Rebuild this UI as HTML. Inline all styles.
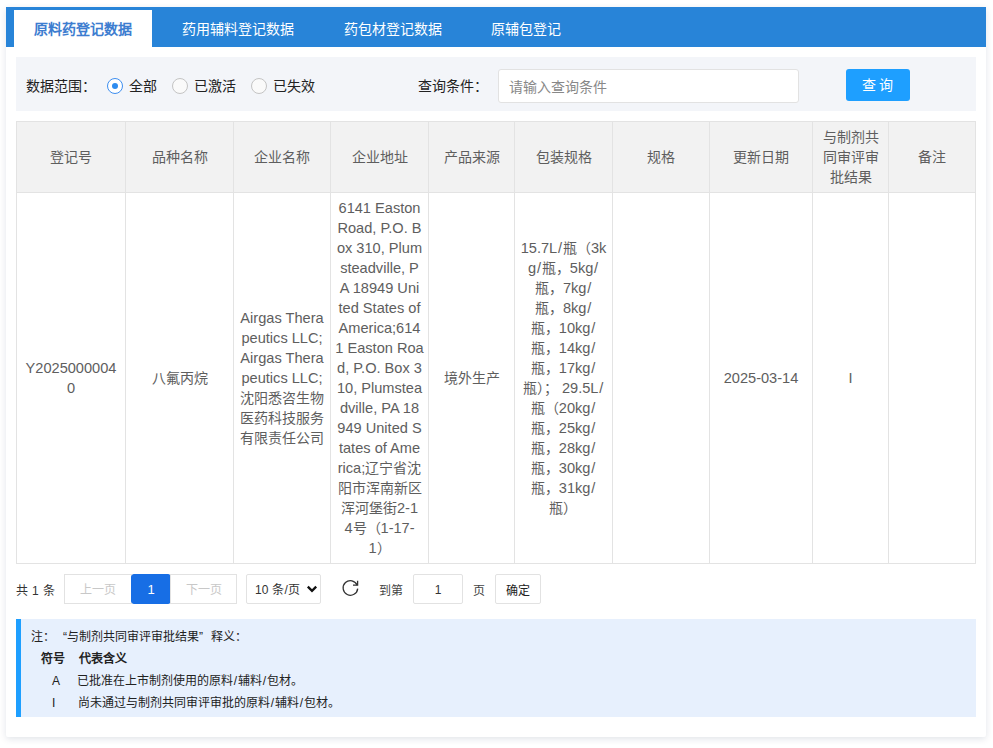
<!DOCTYPE html>
<html lang="zh-CN"><head><meta charset="utf-8">
<style>
*{box-sizing:border-box;margin:0;padding:0}
html,body{width:993px;height:748px;overflow:hidden;background:#fff;font-family:"Liberation Sans",sans-serif;color:#333}
.a{position:absolute;white-space:nowrap}
.card{position:absolute;left:6px;top:7px;width:980px;height:730px;background:#fff;border-radius:2px;box-shadow:0 2px 7px rgba(10,30,70,.12)}
.tabs{position:absolute;left:6px;top:7px;width:980px;height:40px;background:#2884d8}
.tab{position:absolute;top:10px;height:37px;line-height:39px;font-size:14px;color:#fff;font-weight:500;padding:0 20px;white-space:nowrap}
.tab.active{background:#fff;color:#3d7dd0;font-weight:bold}
.filter{position:absolute;left:16px;top:57px;width:960px;height:54px;background:#f3f5f9}
.t14{font-size:14px;line-height:16px;color:#222}
.radio{position:absolute;width:16px;height:16px;border:1.5px solid #c4c4c4;border-radius:50%;background:#fafafa}
.radio.on{border:1px solid #3d8ef0;background:#fff}
.radio.on:after{content:"";position:absolute;left:4px;top:4px;width:6px;height:6px;border-radius:50%;background:#2d8cf0}
.th,.td{position:absolute;border:1px solid #e3e3e3;display:flex;align-items:center;justify-content:center;text-align:center;color:#5e5e5e;font-size:14px;line-height:20px}
.th{top:121px;height:72px;background:#f2f2f2}
.td{top:192px;height:372px;background:#fff}
.c{white-space:nowrap}
.pg{position:absolute;top:574px;height:30px;border:1px solid #e2e2e2;font-size:12px;line-height:30px;text-align:center;background:#fff}
.note{position:absolute;left:16px;top:619px;width:960px;height:98px;background:#e7f0fd;border-left:5px solid #1e9fff}
.nt{position:absolute;font-size:12px;line-height:16px;color:#222;white-space:nowrap}
.q{display:inline-block;width:12px}
.sl{font-style:normal;padding:0 0.8px}
.l{font-size:14.6px}

</style></head><body>
<div class="card"></div>
<div class="tabs"></div>
<div class="tab active" style="left:14px">原料药登记数据</div>
<div class="tab" style="left:162px">药用辅料登记数据</div>
<div class="tab" style="left:324px">药包材登记数据</div>
<div class="tab" style="left:471px">原辅包登记</div>
<div class="filter"></div>
<div class="a t14" style="left:26px;top:78px">数据范围：</div>
<div class="radio on" style="left:107px;top:78px"></div>
<div class="a t14" style="left:129px;top:78px">全部</div>
<div class="radio" style="left:172px;top:78px"></div>
<div class="a t14" style="left:194px;top:78px">已激活</div>
<div class="radio" style="left:251px;top:78px"></div>
<div class="a t14" style="left:273px;top:78px">已失效</div>
<div class="a t14" style="left:418px;top:78px">查询条件：</div>
<div class="a" style="left:498px;top:69px;width:301px;height:34px;background:#fff;border:1px solid #e2e2e2;border-radius:3px;font-size:14px;color:#888;line-height:34px;padding-left:10px">请输入查询条件</div>
<div class="a" style="left:846px;top:69px;width:64px;height:32px;background:#1e9fff;border-radius:3px;color:#fff;font-size:14px;font-weight:500;line-height:32px;text-align:center;letter-spacing:3px;text-indent:1px">查询</div>
<div class="th" style="left:16px;width:110px"><div class="c">登记号</div></div>
<div class="th" style="left:125px;width:109px"><div class="c">品种名称</div></div>
<div class="th" style="left:233px;width:98px"><div class="c">企业名称</div></div>
<div class="th" style="left:330px;width:99px"><div class="c">企业地址</div></div>
<div class="th" style="left:428px;width:87px"><div class="c">产品来源</div></div>
<div class="th" style="left:514px;width:99px"><div class="c">包装规格</div></div>
<div class="th" style="left:612px;width:98px"><div class="c">规格</div></div>
<div class="th" style="left:709px;width:104px"><div class="c">更新日期</div></div>
<div class="th" style="left:812px;width:77px"><div class="c">与制剂共<br>同审评审<br>批结果</div></div>
<div class="th" style="left:888px;width:88px"><div class="c">备注</div></div>
<div class="td" style="left:16px;width:110px"><div class="c"><span class="l">Y2025000004</span><br><span class="l">0</span></div></div>
<div class="td" style="left:125px;width:109px"><div class="c">八氟丙烷</div></div>
<div class="td" style="left:233px;width:98px"><div class="c"><span class="l">Airgas Thera</span><br><span class="l">peutics LLC;</span><br><span class="l">Airgas Thera</span><br><span class="l">peutics LLC;</span><br>沈阳悉咨生物<br>医药科技服务<br>有限责任公司</div></div>
<div class="td" style="left:330px;width:99px"><div class="c"><span class="l">6141 Easton</span><br><span class="l">Road, P.O. B</span><br><span class="l">ox 310, Plum</span><br><span class="l">steadville, P</span><br><span class="l">A 18949 Uni</span><br><span class="l">ted States of</span><br><span class="l">America;614</span><br><span class="l">1 Easton Roa</span><br><span class="l">d, P.O. Box 3</span><br><span class="l">10, Plumstea</span><br><span class="l">dville, PA 18</span><br><span class="l">949 United S</span><br><span class="l">tates of Ame</span><br><span class="l">rica;</span>辽宁省沈<br>阳市浑南新区<br>浑河堡街<span class="l">2-1</span><br><span class="l">4</span>号（<span class="l">1-17-</span><br><span class="l">1</span>）</div></div>
<div class="td" style="left:428px;width:87px"><div class="c">境外生产</div></div>
<div class="td" style="left:514px;width:99px"><div class="c"><span class="l">15.7L<i class="sl">/</i></span>瓶（<span class="l">3k</span><br><span class="l">g<i class="sl">/</i></span>瓶，<span class="l">5kg<i class="sl">/</i></span><br>瓶，<span class="l">7kg<i class="sl">/</i></span><br>瓶，<span class="l">8kg<i class="sl">/</i></span><br>瓶，<span class="l">10kg<i class="sl">/</i></span><br>瓶，<span class="l">14kg<i class="sl">/</i></span><br>瓶，<span class="l">17kg<i class="sl">/</i></span><br>瓶）；<span class="l"> 29.5L<i class="sl">/</i></span><br>瓶（<span class="l">20kg<i class="sl">/</i></span><br>瓶，<span class="l">25kg<i class="sl">/</i></span><br>瓶，<span class="l">28kg<i class="sl">/</i></span><br>瓶，<span class="l">30kg<i class="sl">/</i></span><br>瓶，<span class="l">31kg<i class="sl">/</i></span><br>瓶）</div></div>
<div class="td" style="left:612px;width:98px"><div class="c"></div></div>
<div class="td" style="left:709px;width:104px"><div class="c"><span class="l">2025-03-14</span></div></div>
<div class="td" style="left:812px;width:77px"><div class="c"><span class="l">I</span></div></div>
<div class="td" style="left:888px;width:88px"><div class="c"></div></div>
<div class="a" style="left:16px;top:583px;font-size:12px;line-height:16px;color:#333;letter-spacing:0.3px">共 1 条</div>
<div class="pg" style="left:64px;width:68px;color:#c8c8c8">上一页</div>
<div class="pg" style="left:131px;width:40px;background:#176ee5;border-color:#176ee5;color:#fff;border-radius:3px;font-size:13px">1</div>
<div class="pg" style="left:170px;width:67px;color:#c8c8c8">下一页</div>
<div class="pg" style="left:246px;width:75px;border-radius:2px;color:#333;font-size:12px;text-align:left;padding-left:8px;letter-spacing:0.2px">10 条/页</div>
<svg class="a" style="left:306px;top:584px" width="12" height="10" viewBox="0 0 12 10"><path d="M1.8 2.6 L6 6.8 L10.2 2.6" stroke="#111" stroke-width="2.3" fill="none"/></svg>
<svg class="a" style="left:336px;top:574px" width="30" height="28" viewBox="0 0 30 28"><path d="M21.7 14.6 A7.3 7.3 0 1 1 21.2 11.2" stroke="#333" stroke-width="1.3" fill="none"/><path d="M21.6 6.8 L21.6 11.2 L17 11.2" stroke="#333" stroke-width="1.3" fill="none"/></svg>
<div class="a" style="left:379px;top:583px;font-size:12px;line-height:16px;color:#444">到第</div>
<div class="pg" style="left:413px;width:50px;border-radius:2px;color:#333;font-size:12px">1</div>
<div class="a" style="left:473px;top:583px;font-size:12px;line-height:16px;color:#444">页</div>
<div class="pg" style="left:495px;width:46px;border-radius:2px;color:#222;line-height:33px">确定</div>
<div class="note"></div>
<div class="nt" style="left:31px;top:629px">注：<span class="q" style="text-align:right">“</span>与制剂共同审评审批结果<span class="q" style="text-align:left">”</span>释义：</div>
<div class="nt" style="left:41px;top:651px;font-weight:bold">符号</div>
<div class="nt" style="left:79px;top:651px;font-weight:bold">代表含义</div>
<div class="nt" style="left:52px;top:673px">A</div>
<div class="nt" style="left:77px;top:673px">已批准在上市制剂使用的原料<i class="sl">/</i>辅料<i class="sl">/</i>包材。</div>
<div class="nt" style="left:52px;top:695px">I</div>
<div class="nt" style="left:78px;top:695px">尚未通过与制剂共同审评审批的原料<i class="sl">/</i>辅料<i class="sl">/</i>包材。</div>

</body></html>
